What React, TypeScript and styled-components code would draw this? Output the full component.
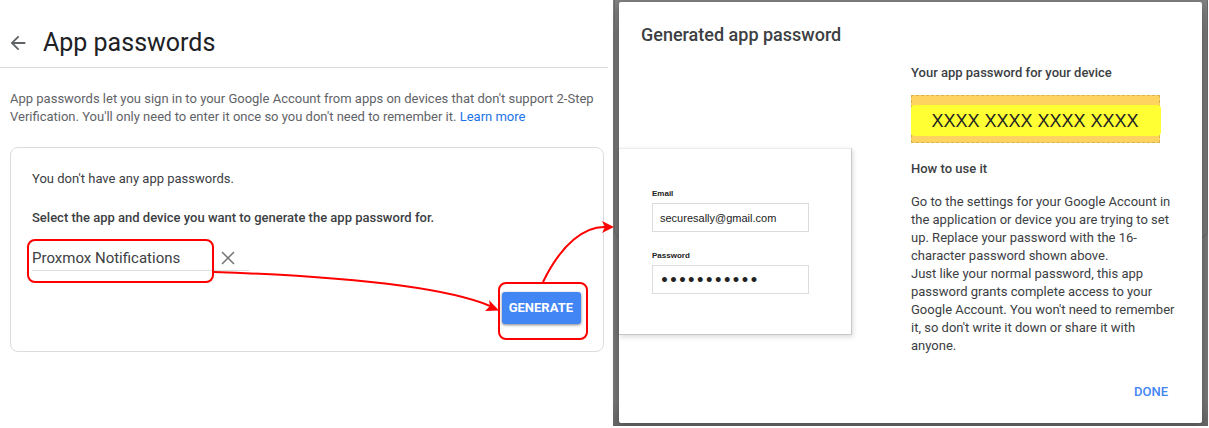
import React from "react";
import styled, { createGlobalStyle } from "styled-components";

const GlobalStyle = createGlobalStyle`
  *, *::before, *::after { box-sizing: border-box; }
  body {
    margin: 0;
    background: #fff;
    color: #3c4043;
    font: 400 13px/18px Roboto, "Liberation Sans", sans-serif;
  }
  h1, h2, h3, p { margin: 0; }
  button, input { font: inherit; color: inherit; }
`;

const Page = styled.div`
  display: grid;
  grid-template-columns: minmax(0, 613fr) minmax(0, 595fr);
  padding-right: 1px;
`;

const Settings = styled.main`
  position: relative;
  padding-right: 5px;
`;

const Header = styled.header`
  display: flex;
  align-items: center;
  gap: 14px;
  padding: 27px 7px 8px;
  border-bottom: 1px solid #dadce0;
`;

const IconButton = styled.button`
  display: flex;
  padding: 0;
  border: 0;
  background: none;
  color: #5f6368;
  cursor: pointer;
`;

const PageTitle = styled.h1`
  color: #202124;
  font-size: 25px;
  font-weight: 400;
  line-height: 32px;
`;

const Intro = styled.p`
  padding: 22px 10px 21px;
  color: #5f6368;

  a { color: #1a73e8; text-decoration: none; }
`;

const Card = styled.section`
  display: flex;
  flex-direction: column;
  margin: 0 4px 0 10px;
  padding: 22px 22px 27px 21px;
  border: 1px solid #dadce0;
  border-radius: 8px;
`;

const Prompt = styled.label`
  margin: 21px 0 19px;
  font-weight: 500;
`;

const Ring = styled.div<{ $inset: string }>`
  position: relative;

  &::after {
    content: "";
    position: absolute;
    inset: ${(p) => p.$inset};
    border: 2px solid #f00;
    border-radius: 8px;
    pointer-events: none;
  }
`;

const NameField = styled(Ring)`
  display: flex;
  align-items: center;
  width: 217px;
  height: 25px;
  border-bottom: 1px solid #dadce0;

  input {
    width: 187px;
    padding: 0;
    border: 0;
    outline: 0;
    background: none;
    font-size: 15px;
  }
`;

const Generate = styled(Ring)`
  align-self: flex-end;
  margin-top: 21px;
`;

const PrimaryButton = styled.button`
  display: block;
  height: 32px;
  padding: 0 8px 0 7px;
  border: 0;
  border-radius: 3px;
  background: #4285f4;
  box-shadow: 0 1px 3px rgba(0, 0, 0, 0.5);
  color: #fff;
  font-weight: 700;
`;

const Arrows = styled.svg`
  position: absolute;
  top: 0;
  left: 0;
  z-index: 1;
  pointer-events: none;
`;

const Backdrop = styled.div`
  position: relative;
  padding: 2px 6px 3px;
  background: linear-gradient(#828282, #757575 30px, #757575 400px, #666);

  &::before {
    content: "";
    position: absolute;
    inset: 0 0 188px 1px;
    border: solid #686868;
    border-width: 0 1px 1px;
    border-radius: 0 0 8px 8px;
  }
`;

const Dialog = styled.section`
  position: relative;
  display: grid;
  grid-template-columns: minmax(0, 292fr) minmax(0, 291fr);
  height: 100%;
  border-radius: 2px;
  background: #fff;
  box-shadow: 0 2px 8px rgba(0, 0, 0, 0.25);
`;

const DialogTitle = styled.h2`
  padding: 21px 22px 0;
  font-size: 18px;
  font-weight: 500;
  line-height: 24px;
`;

const Sample = styled.div`
  display: flex;
  flex-direction: column;
  width: 233px;
  height: 187px;
  margin-top: 101px;
  padding: 40px 42px 0 33px;
  border: 1px solid #c8c8c8;
  border-top-color: #ececec;
  border-left: 0;
  box-shadow: 1px 2px 5px rgba(0, 0, 0, 0.15);
  color: #222;
  font-family: "Liberation Sans", Arial, sans-serif;

  label {
    font-size: 8px;
    font-weight: 700;
    line-height: 10px;
  }
`;

const SampleInput = styled.input<{ $masked?: boolean }>`
  height: 29px;
  margin: 4px 0 19px;
  padding: 0 7px;
  border: 1px solid #dcdcdc;
  outline: 0;
  background: #fff;
  font: ${(p) =>
    p.$masked ? '700 14px "DejaVu Sans", sans-serif' : '400 11px "Liberation Sans", sans-serif'};
`;

const Details = styled.div`
  display: flex;
  flex-direction: column;
  padding: 62px 26px 13px 0;
`;

const Subhead = styled.h3`
  font-size: 13px;
  font-weight: 500;
`;

const Password = styled.div`
  width: 249px;
  margin: 13px 0 17px;
  padding: 9px 0 6px;
  border: 1px dashed #d8b44c;
  background: #ffd35f;

  output {
    display: block;
    margin: 0 -2px 0 -1px;
    padding: 1px 2px 0 0;
    border-radius: 4px;
    background: #ff3;
    color: #222;
    font: 18px/30px "Liberation Sans", Arial, sans-serif;
    text-align: center;
  }
`;

const Steps = styled.div`
  margin-top: 15px;
`;

const TextButton = styled.button`
  align-self: flex-end;
  height: 36px;
  margin-top: 19px;
  padding: 0 8px;
  border: 0;
  background: none;
  color: #4285f4;
  font-weight: 500;
`;

export default function App() {
  return (
    <Page>
      <GlobalStyle />
      <Settings>
        <Header>
          <IconButton aria-label="Back">
            <svg width="22" height="22" viewBox="0 0 24 24" fill="currentColor">
              <path d="M20 11H7.83l5.59-5.59L12 4l-8 8 8 8 1.41-1.41L7.83 13H20v-2z" />
            </svg>
          </IconButton>
          <PageTitle>App passwords</PageTitle>
        </Header>
        <Intro>
          App passwords let you sign in to your Google Account from apps on devices that don't
          support 2-Step Verification. You'll only need to enter it once so you don't need to
          remember it. <a href="#learn">Learn more</a>
        </Intro>
        <Card>
          <p>You don't have any app passwords.</p>
          <Prompt htmlFor="app-name">
            Select the app and device you want to generate the app password for.
          </Prompt>
          <NameField $inset="-7px 35px -13px -5px">
            <input id="app-name" defaultValue="Proxmox Notifications" />
            <IconButton aria-label="Clear">
              <svg width="18" height="14" viewBox="0 0 18 14" stroke="#757575" strokeWidth="1.5">
                <path d="M3 1l12 12M15 1L3 13" />
              </svg>
            </IconButton>
          </NameField>
          <Generate $inset="-10px -7px -16px -4px">
            <PrimaryButton>GENERATE</PrimaryButton>
          </Generate>
        </Card>
        <Arrows width="616" height="350" fill="none" stroke="#f00" strokeWidth="2">
          <path d="M214 272C330 276 440 285 490 306" />
          <path d="M543 282C562 243 585 226 606 227" />
          <path d="M499 310.500l-14 .5 5-5-1-6z" fill="#f00" stroke="none" />
          <path d="M614 227l-12 6 3-6-3-6z" fill="#f00" stroke="none" />
        </Arrows>
      </Settings>
      <Backdrop>
        <Dialog role="dialog" aria-labelledby="dialog-title">
          <div>
            <DialogTitle id="dialog-title">Generated app password</DialogTitle>
            <Sample>
              <label htmlFor="email">Email</label>
              <SampleInput id="email" readOnly value="securesally@gmail.com" />
              <label htmlFor="secret">Password</label>
              <SampleInput id="secret" type="password" $masked readOnly value="12345678901" />
            </Sample>
          </div>
          <Details>
            <Subhead>Your app password for your device</Subhead>
            <Password>
              <output>XXXX XXXX XXXX XXXX</output>
            </Password>
            <Subhead>How to use it</Subhead>
            <Steps>
              <p>
                Go to the settings for your Google Account in the application or device you are
                trying to set up. Replace your password with the 16-character password shown above.
              </p>
              <p>
                Just like your normal password, this app password grants complete access to your
                Google Account. You won't need to remember it, so don't write it down or share it
                with anyone.
              </p>
            </Steps>
            <TextButton>DONE</TextButton>
          </Details>
        </Dialog>
      </Backdrop>
    </Page>
  );
}
